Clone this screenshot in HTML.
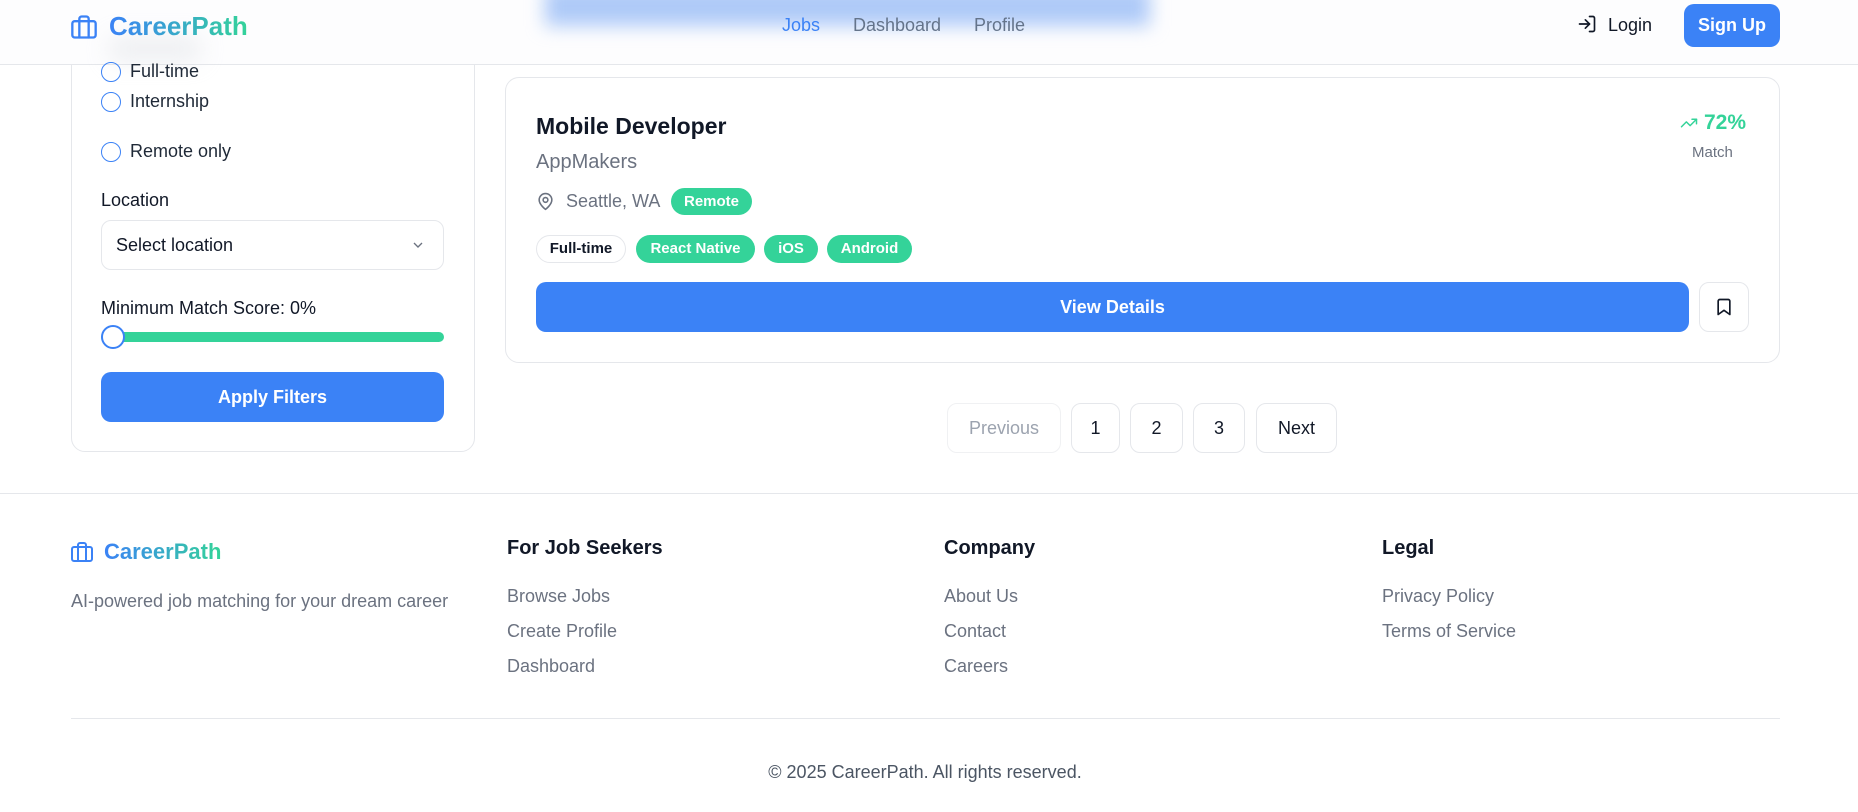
<!DOCTYPE html>
<html><head><meta charset="utf-8"><style>
*{box-sizing:border-box;margin:0;padding:0}
body{width:1858px;height:812px;overflow:hidden;background:#fff;font-family:"Liberation Sans",sans-serif;color:#111827;position:relative}
.abs{position:absolute}
.grad{background:linear-gradient(90deg,#3b82f6,#34d399);-webkit-background-clip:text;background-clip:text;color:transparent;font-weight:700}
.card{border:1px solid #e5e7eb;border-radius:14px;background:#fff}
.radio{position:absolute;width:20px;height:20px;border:1.5px solid #3b82f6;border-radius:50%}
.lbl{position:absolute;font-size:18px;color:#1f2937}
.tag{position:absolute;height:28px;border-radius:14px;font-size:15px;font-weight:700;line-height:28px;text-align:center;color:#fff;background:#34d399}
.pg{position:absolute;top:403px;height:50px;border:1px solid #e5e7eb;border-radius:10px;font-size:18px;line-height:48px;text-align:center;color:#111827}
.fh{position:absolute;top:537px;font-size:20px;font-weight:700}
.fl{position:absolute;font-size:18px;color:#6b7280}
</style></head><body>
<!-- sidebar -->
<div class="abs card" style="left:71px;top:-20px;width:404px;height:472px"></div>
<!-- header -->
<div class="abs" style="left:0;top:0;width:1858px;height:65px;background:#fdfdfe;border-bottom:1px solid #e5e7eb"></div>
<div class="abs" style="left:545px;top:-14px;width:605px;height:40px;background:#aecaf8;filter:blur(9px)"></div>
<div class="abs" style="left:110px;top:38px;width:90px;height:22px;background:#d1d5db;filter:blur(12px);opacity:.4"></div>
<svg class="abs" style="left:70px;top:12px" width="28" height="30" viewBox="0 0 24 24" fill="none" stroke="#3b82f6" stroke-width="2" stroke-linecap="round" stroke-linejoin="round"><rect x="2" y="7" width="20" height="14" rx="2"/><path d="M16 21V5a2 2 0 0 0-2-2h-4a2 2 0 0 0-2 2v16"/></svg>
<div class="abs grad" style="left:109px;top:11px;font-size:26px">CareerPath</div>
<div class="abs" style="left:782px;top:15px;font-size:18px;color:#3b82f6">Jobs</div>
<div class="abs" style="left:853px;top:15px;font-size:18px;color:#64748b">Dashboard</div>
<div class="abs" style="left:974px;top:15px;font-size:18px;color:#64748b">Profile</div>
<svg class="abs" style="left:1577px;top:14px" width="20" height="20" viewBox="0 0 24 24" fill="none" stroke="#111827" stroke-width="2" stroke-linecap="round" stroke-linejoin="round"><path d="M15 3h4a2 2 0 0 1 2 2v14a2 2 0 0 1-2 2h-4"/><path d="M10 17l5-5-5-5"/><path d="M15 12H3"/></svg>
<div class="abs" style="left:1608px;top:15px;font-size:18px;color:#111827">Login</div>
<div class="abs" style="left:1684px;top:4px;width:96px;height:43px;border-radius:10px;background:#3b82f6;color:#fff;font-size:18px;font-weight:700;text-align:center;line-height:43px">Sign Up</div>
<div class="radio" style="left:101px;top:62px"></div><div class="lbl" style="left:130px;top:61px">Full-time</div>
<div class="radio" style="left:101px;top:92px"></div><div class="lbl" style="left:130px;top:91px">Internship</div>
<div class="radio" style="left:101px;top:142px"></div><div class="lbl" style="left:130px;top:141px">Remote only</div>
<div class="lbl" style="left:101px;top:190px;color:#111827">Location</div>
<div class="abs" style="left:101px;top:220px;width:343px;height:50px;border:1px solid #e5e7eb;border-radius:10px"></div>
<div class="lbl" style="left:116px;top:235px;color:#111827">Select location</div>
<svg class="abs" style="left:410px;top:237px" width="16" height="16" viewBox="0 0 24 24" fill="none" stroke="#6b7280" stroke-width="2"><path d="M6 9l6 6 6-6"/></svg>
<div class="lbl" style="left:101px;top:298px;color:#111827">Minimum Match Score: 0%</div>
<div class="abs" style="left:101px;top:332px;width:343px;height:10px;border-radius:5px;background:#34d399"></div>
<div class="abs" style="left:101px;top:325px;width:24px;height:24px;border-radius:50%;background:#fff;border:2px solid #3b82f6"></div>
<div class="abs" style="left:101px;top:372px;width:343px;height:50px;border-radius:10px;background:#3b82f6;color:#fff;font-size:18px;font-weight:700;text-align:center;line-height:50px">Apply Filters</div>
<!-- job card -->
<div class="abs card" style="left:505px;top:77px;width:1275px;height:286px"></div>
<div class="abs" style="left:536px;top:113px;font-size:23px;font-weight:700">Mobile Developer</div>
<div class="abs" style="left:536px;top:151px;font-size:20px;color:#6b7280">AppMakers</div>
<svg class="abs" style="left:536px;top:191px" width="19" height="21" viewBox="0 0 24 24" fill="none" stroke="#6b7280" stroke-width="2" stroke-linecap="round" stroke-linejoin="round"><path d="M20 10c0 6-8 12-8 12s-8-6-8-12a8 8 0 0 1 16 0z"/><circle cx="12" cy="10" r="3"/></svg>
<div class="abs" style="left:566px;top:191px;font-size:18px;color:#6b7280">Seattle, WA</div>
<div class="tag" style="left:671px;top:188px;width:81px;height:27px;line-height:27px">Remote</div>
<div class="tag" style="left:536px;top:235px;width:90px;background:#fff;color:#111827;border:1px solid #e5e7eb;line-height:26px">Full-time</div>
<div class="tag" style="left:636px;top:235px;width:119px">React Native</div>
<div class="tag" style="left:764px;top:235px;width:54px">iOS</div>
<div class="tag" style="left:827px;top:235px;width:85px">Android</div>
<div class="abs" style="left:536px;top:282px;width:1153px;height:50px;border-radius:10px;background:#3b82f6;color:#fff;font-size:18px;font-weight:700;text-align:center;line-height:50px">View Details</div>
<div class="abs" style="left:1699px;top:282px;width:50px;height:50px;border:1px solid #e5e7eb;border-radius:10px"></div>
<svg class="abs" style="left:1714px;top:297px" width="20" height="20" viewBox="0 0 24 24" fill="none" stroke="#111827" stroke-width="2" stroke-linejoin="round"><path d="M19 21l-7-5-7 5V5a2 2 0 0 1 2-2h10a2 2 0 0 1 2 2z"/></svg>
<svg class="abs" style="left:1679px;top:114px" width="20" height="18" viewBox="0 0 24 24" fill="none" stroke="#34d399" stroke-width="2" stroke-linecap="round" stroke-linejoin="round"><path d="M22 7l-8.5 8.5-5-5L2 17"/><path d="M16 7h6v6"/></svg>
<div class="abs" style="left:1704px;top:111px;font-size:21px;font-weight:700;color:#34d399">72%</div>
<div class="abs" style="left:1692px;top:144px;font-size:15px;color:#6b7280">Match</div>
<!-- pagination -->
<div class="pg" style="left:947px;width:114px;color:#9ca3af;border-color:#f0f1f3">Previous</div>
<div class="pg" style="left:1071px;width:49px">1</div>
<div class="pg" style="left:1130px;width:53px">2</div>
<div class="pg" style="left:1193px;width:52px">3</div>
<div class="pg" style="left:1256px;width:81px">Next</div>
<!-- footer -->
<div class="abs" style="left:0;top:493px;width:1858px;height:1px;background:#e5e7eb"></div>
<svg class="abs" style="left:70px;top:540px" width="24" height="24" viewBox="0 0 24 24" fill="none" stroke="#3b82f6" stroke-width="2" stroke-linecap="round" stroke-linejoin="round"><rect x="2" y="7" width="20" height="14" rx="2"/><path d="M16 21V5a2 2 0 0 0-2-2h-4a2 2 0 0 0-2 2v16"/></svg>
<div class="abs grad" style="left:104px;top:539px;font-size:22px">CareerPath</div>
<div class="fl" style="left:71px;top:591px">AI-powered job matching for your dream career</div>
<div class="fh" style="left:507px">For Job Seekers</div>
<div class="fl" style="left:507px;top:586px">Browse Jobs</div>
<div class="fl" style="left:507px;top:621px">Create Profile</div>
<div class="fl" style="left:507px;top:656px">Dashboard</div>
<div class="fh" style="left:944px">Company</div>
<div class="fl" style="left:944px;top:586px">About Us</div>
<div class="fl" style="left:944px;top:621px">Contact</div>
<div class="fl" style="left:944px;top:656px">Careers</div>
<div class="fh" style="left:1382px">Legal</div>
<div class="fl" style="left:1382px;top:586px">Privacy Policy</div>
<div class="fl" style="left:1382px;top:621px">Terms of Service</div>
<div class="abs" style="left:71px;top:718px;width:1709px;height:1px;background:#e5e7eb"></div>
<div class="fl" style="left:0;width:1850px;text-align:center;top:762px;color:#4b5563">© 2025 CareerPath. All rights reserved.</div>
</body></html>
